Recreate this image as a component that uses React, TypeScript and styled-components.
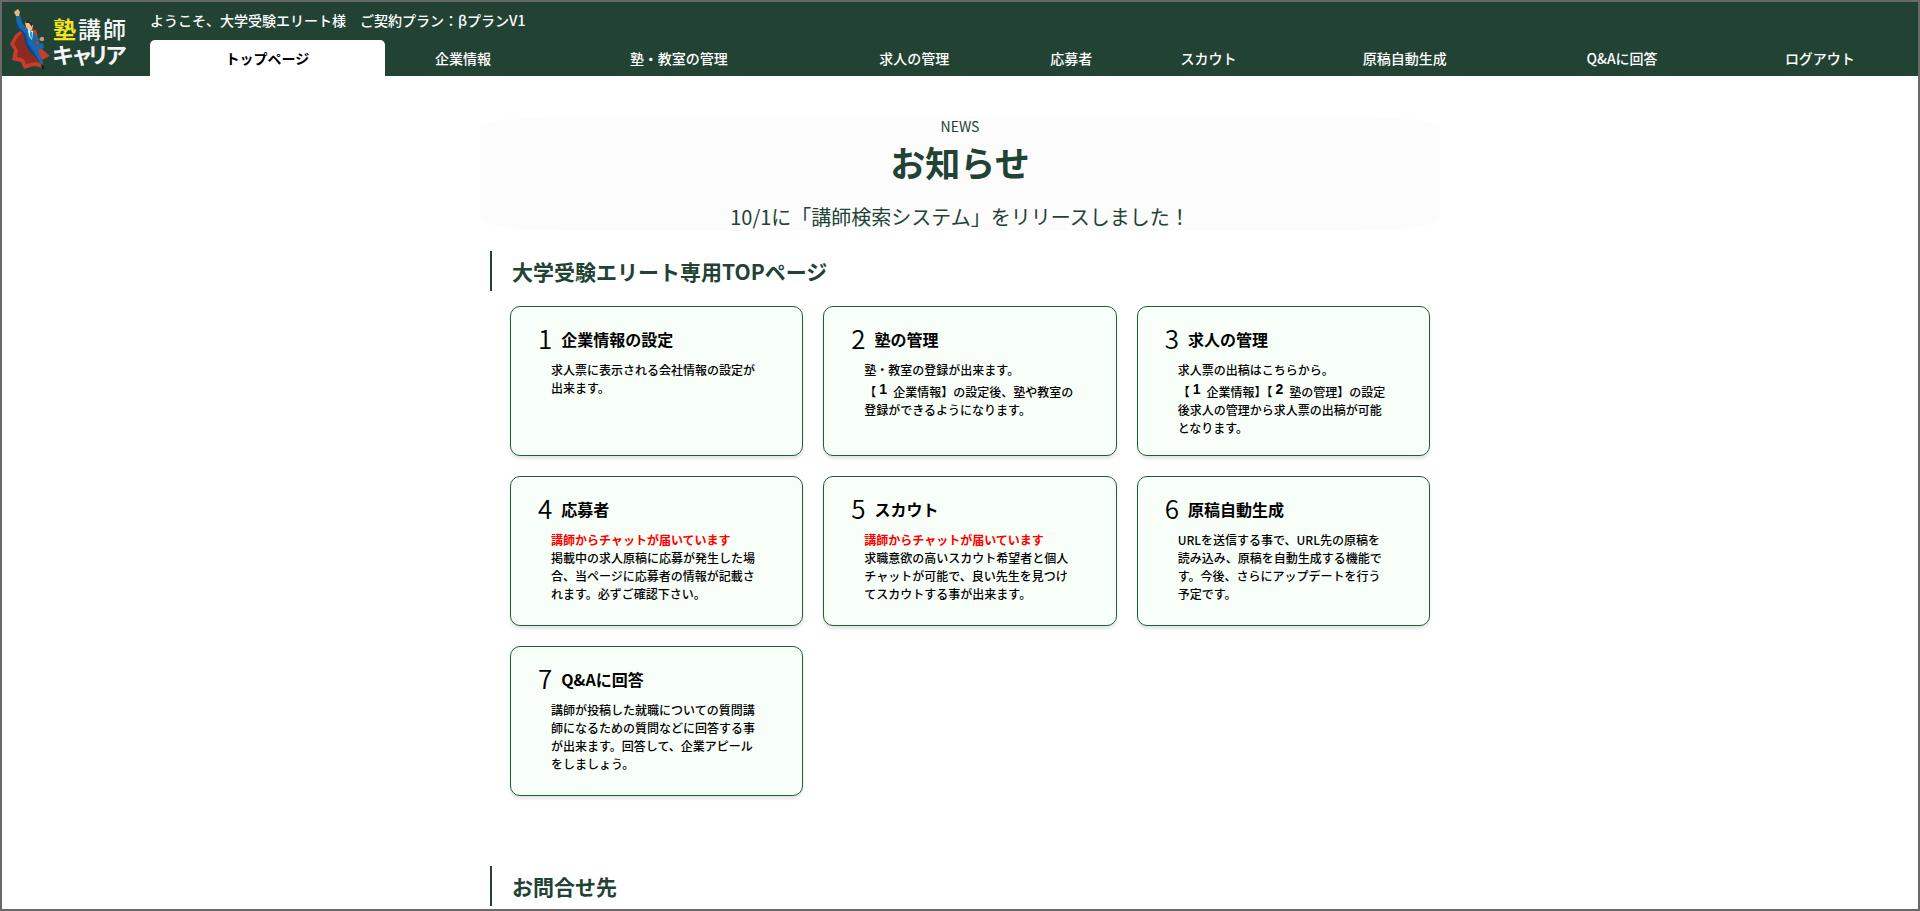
import React from 'react';
import styled, { createGlobalStyle } from 'styled-components';

const GREEN = '#224234';

const GlobalStyle = createGlobalStyle`
  *, *::before, *::after { box-sizing: border-box; }
  html { overflow: hidden; background: #fff; }
  body {
    margin: 0;
    font-family: 'Noto Sans CJK JP', sans-serif;
    font-size: 14px;
    color: ${GREEN};
  }
`;

const Frame = styled.div`
  height: 100vh;
  border: 2px solid #6b686a;
  overflow: hidden;
  background: #fff;
`;

const Header = styled.header`
  display: flex;
  height: 74px;
  background: ${GREEN};
`;

const LogoLink = styled.a`
  flex: 0 0 148px;
  padding: 4px 0 0 6px;
`;

const HeaderMain = styled.div`
  flex: 1;
  display: flex;
  flex-direction: column;
  justify-content: space-between;
`;

const Welcome = styled.p`
  margin: 0;
  padding-top: 8px;
  font-weight: 500;
  line-height: 20px;
  color: #fff;
`;

const Tabs = styled.ul`
  display: table;
  width: 100%;
  margin: 0;
  padding: 0;
  list-style: none;
`;

const TabItem = styled.li`
  display: table-cell;
`;

const TabLink = styled.a<{ $active?: boolean }>`
  display: block;
  height: 36px;
  border-radius: 5px 5px 0 0;
  line-height: 36px;
  text-align: center;
  text-decoration: none;
  white-space: nowrap;
  font-weight: ${(p) => (p.$active ? 700 : 500)};
  color: ${(p) => (p.$active ? '#000' : '#fff')};
  background: ${(p) => (p.$active ? '#fff' : 'transparent')};
`;

const Main = styled.main`
  max-width: 960px;
  margin: 40px auto 0;
`;

const News = styled.section`
  border-radius: 10%;
  background: #fcfcfc;
  text-align: center;
`;

const NewsLabel = styled.p`
  margin: 0;
  line-height: 21px;
`;

const NewsTitle = styled.h1`
  margin: 0;
  font-size: 35px;
  font-weight: 700;
  line-height: 50px;
`;

const NewsText = styled.p`
  margin: 0;
  padding-top: 16px;
  font-size: 20px;
  line-height: 28px;
`;

const SectionTitle = styled.h2`
  margin: 20px 10px 0;
  padding-left: 20px;
  border-left: 2px solid ${GREEN};
  font-size: 21px;
  font-weight: 700;
  line-height: 40px;
`;

const CardGrid = styled.div`
  display: grid;
  grid-template-columns: repeat(3, 1fr);
  gap: 20px;
  margin: 15px 10px 70px 30px;
`;

const Card = styled.a`
  min-height: 150px;
  padding: 15px 27px;
  border: 1px solid #1b6230;
  border-radius: 10px;
  background: #f8fff8;
  box-shadow: 0 3px 3px rgba(0, 0, 0, 0.1);
  color: #000;
  text-decoration: none;
`;

const CardHead = styled.div`
  display: flex;
  align-items: flex-start;
  gap: 9px;
  height: 34px;
`;

const CardNumber = styled.span`
  font-size: 26px;
  font-weight: 350;
  line-height: 32px;
`;

const CardTitle = styled.h3`
  margin: 0;
  font-size: 16px;
  font-weight: 700;
  line-height: 34px;
`;

const CardBody = styled.p`
  margin: 5px 12px 0 13px;
  font-size: 12px;
  font-weight: 500;
  line-height: 18px;
`;

const Alert = styled.strong`
  display: block;
  font-weight: 700;
  color: #f00;
`;

const StepRef = styled.span`
  margin: 0 6px 0 3px;
  vertical-align: 3px;
  font-family: 'Liberation Sans', sans-serif;
  font-size: 14px;
  font-weight: 700;
  line-height: 20px;
`;

function Logo() {
  return (
    <svg width="122" height="68" viewBox="8 6 122 68" role="img" aria-label="塾講師キャリア">
      <path d="M24 28 L15 35 L10 44 L14 50 L12 60 L21 62 L24 69 L34 66 L44 68 L42 60 L50 56 L43 50 L39 42 L36 30 Z" fill="#c63d2c" />
      <path d="M24 31 L17 38 L14 44 L18 50 L17 57 L24 59 L26 64 L35 62 L41 63 L38 52 L34 38 Z" fill="#8e2b20" />
      <path d="M16 16 L20 15 L22 23 L27 29 L33 31 L36 36 L40 39 L39 42 L34 41 L35 44 L43 43 L44 48 L38 50 L43 63 L42 66 L37 59 L30 50 L26 43 L24 35 L17 27 Z" fill="#1769ae" />
      <path d="M16 20 L19 27 L26 34 L28 44 L34 52 L41 64 L36 58 L29 51 L25 43 L24 35 L17 27 Z" fill="#0a4688" />
      <path d="M28 30 L33 31 L32 40 L29 36 Z" fill="#fff" />
      <path d="M30 31 L32 32 L32 39 L30 36 Z" fill="#1d9bd7" />
      <path d="M14 12 L18 9 L20 12 L19 16 L16 16 Z" fill="#e9b384" />
      <path d="M25 22 L30 21 L33 26 L32 30 L28 30 L26 27 Z" fill="#f2bd8d" />
      <path d="M25 23 L28 20 L32 23 L32 27 L29 23 Z" fill="#33201a" />
      <circle cx="42" cy="39" r="2.2" fill="#d9966a" />
      <path d="M41 64 L44 66 L44 70 L42 68 Z" fill="#14181b" />
      <g fontFamily="'Noto Sans CJK JP', sans-serif" fill="#f5f5f5">
        <text x="53" y="38" fontSize="23" fontWeight="700" fill="#f2e61e">塾</text>
        <text x="78 103" y="38" fontSize="23" fontWeight="500">講師</text>
        <text x="52 71 87 105" y="63" fontSize="22" fontWeight="700">キャリア</text>
      </g>
    </svg>
  );
}

const tabs = [
  'トップページ',
  '企業情報',
  '塾・教室の管理',
  '求人の管理',
  '応募者',
  'スカウト',
  '原稿自動生成',
  'Q&Aに回答',
  'ログアウト',
];

const cards: { title: string; alert?: string; body: React.ReactNode }[] = [
  { title: '企業情報の設定', body: '求人票に表示される会社情報の設定が出来ます。' },
  {
    title: '塾の管理',
    body: (
      <>
        塾・教室の登録が出来ます。
        <br />
        【<StepRef>1</StepRef>企業情報】の設定後、塾や教室の登録ができるようになります。
      </>
    ),
  },
  {
    title: '求人の管理',
    body: (
      <>
        求人票の出稿はこちらから。
        <br />
        【<StepRef>1</StepRef>企業情報】【<StepRef>2</StepRef>塾の管理】の設定後求人の管理から求人票の出稿が可能となります。
      </>
    ),
  },
  {
    title: '応募者',
    alert: '講師からチャットが届いています',
    body: '掲載中の求人原稿に応募が発生した場合、当ページに応募者の情報が記載されます。必ずご確認下さい。',
  },
  {
    title: 'スカウト',
    alert: '講師からチャットが届いています',
    body: '求職意欲の高いスカウト希望者と個人チャットが可能で、良い先生を見つけてスカウトする事が出来ます。',
  },
  {
    title: '原稿自動生成',
    body: 'URLを送信する事で、URL先の原稿を読み込み、原稿を自動生成する機能です。今後、さらにアップデートを行う予定です。',
  },
  {
    title: 'Q&Aに回答',
    body: '講師が投稿した就職についての質問講師になるための質問などに回答する事が出来ます。回答して、企業アピールをしましょう。',
  },
];

export default function App() {
  return (
    <Frame lang="ja">
      <GlobalStyle />
      <Header>
        <LogoLink href="#">
          <Logo />
        </LogoLink>
        <HeaderMain>
          <Welcome>ようこそ、大学受験エリート様　ご契約プラン：βプランV1</Welcome>
          <nav>
            <Tabs>
              {tabs.map((label, i) => (
                <TabItem key={label}>
                  <TabLink href="#" $active={i === 0}>
                    {label}
                  </TabLink>
                </TabItem>
              ))}
            </Tabs>
          </nav>
        </HeaderMain>
      </Header>
      <Main>
        <News>
          <NewsLabel>NEWS</NewsLabel>
          <NewsTitle>お知らせ</NewsTitle>
          <NewsText>10/1に「講師検索システム」をリリースしました！</NewsText>
        </News>
        <SectionTitle>大学受験エリート専用TOPページ</SectionTitle>
        <CardGrid>
          {cards.map((card, i) => (
            <Card href="#" key={card.title}>
              <CardHead>
                <CardNumber>{i + 1}</CardNumber>
                <CardTitle>{card.title}</CardTitle>
              </CardHead>
              <CardBody>
                {card.alert && <Alert>{card.alert}</Alert>}
                {card.body}
              </CardBody>
            </Card>
          ))}
        </CardGrid>
        <SectionTitle>お問合せ先</SectionTitle>
      </Main>
    </Frame>
  );
}
